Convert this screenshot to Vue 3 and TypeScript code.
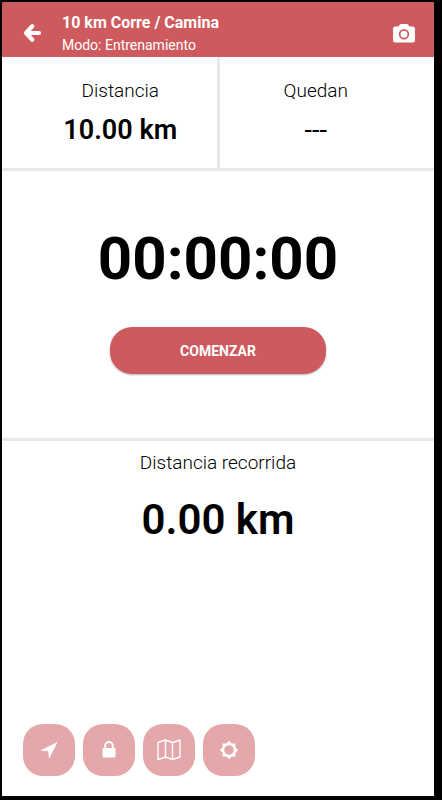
<script setup lang="ts">
import { ref } from 'vue'

interface Stat {
  label: string
  value: string
  empty?: boolean
}

const stats: Stat[] = [
  { label: 'Distancia', value: '10.00 km' },
  { label: 'Quedan', value: '---', empty: true },
]
const elapsed = ref('00:00:00')
const covered = ref('0.00 km')
</script>

<template>
  <div class="frame">
    <div class="screen">
      <header class="bar">
        <button class="bar-button" type="button" aria-label="Volver">
          <svg width="20" height="20" viewBox="0 0 20 20">
            <path d="M10.300 3.200 4 10l6.300 6.800M4.500 10h12.500" fill="none" stroke="#fff" stroke-width="4.200" stroke-linecap="round" stroke-linejoin="round" />
          </svg>
        </button>
        <div class="titles">
          <h1>10 km Corre / Camina</h1>
          <p>Modo: Entrenamiento</p>
        </div>
        <button class="bar-button" type="button" aria-label="Cámara">
          <svg width="22" height="20" viewBox="0 0 22 20">
            <path fill="#fff" fill-rule="evenodd" d="M2.500 3.500h3l1.200-1.700Q7.300 1 8.300 1h5.400q1 0 1.600.8l1.200 1.700h3q2.500 0 2.500 2.500v11q0 2.500-2.500 2.500h-17Q0 19.500 0 17V6q0-2.500 2.500-2.500ZM11 6a5.200 5.200 0 1 0 0 10.400a5.200 5.200 0 1 0 0-10.400Zm0 1.700a3.500 3.500 0 1 1 0 7a3.500 3.500 0 1 1 0-7Z" />
          </svg>
        </button>
      </header>

      <section class="stats">
        <div v-for="stat in stats" :key="stat.label" class="stat">
          <h2 class="label">{{ stat.label }}</h2>
          <p class="stat-value" :class="{ empty: stat.empty }">{{ stat.value }}</p>
        </div>
      </section>

      <section class="timer">
        <p class="clock">{{ elapsed }}</p>
        <button class="start" type="button">COMENZAR</button>
      </section>

      <section class="covered">
        <h2 class="label">Distancia recorrida</h2>
        <p class="covered-value">{{ covered }}</p>
      </section>

      <nav class="tools">
        <button class="tool" type="button" aria-label="Ubicación">
          <svg width="24" height="24" viewBox="0 0 24 24">
            <path fill="#fff" stroke="#fff" stroke-width="0.600" stroke-linejoin="round" d="M20 4.500 12.200 20 11.500 12.800 4 12.500Z" />
          </svg>
        </button>
        <button class="tool" type="button" aria-label="Bloquear">
          <svg width="24" height="24" viewBox="0 0 24 24">
            <path d="M8.200 10V7.800a3.800 3.800 0 0 1 7.600 0V10" fill="none" stroke="#fff" stroke-width="2" />
            <rect x="5.500" y="10" width="13" height="9.500" rx="1" fill="#fff" />
          </svg>
        </button>
        <button class="tool" type="button" aria-label="Mapa">
          <svg width="24" height="24" viewBox="0 0 24 24">
            <path d="M1 4.500 8.500 2 15.500 4.500 23 2V19L15.500 21.500 8.500 19 1 21.500ZM8.500 2V19M15.500 4.500V21.500" fill="none" stroke="#fff" stroke-width="1.400" stroke-linejoin="round" />
          </svg>
        </button>
        <button class="tool" type="button" aria-label="Ajustes">
          <svg width="24" height="24" viewBox="0 0 24 24">
            <path fill="#fff" fill-rule="evenodd" d="M12 2.800 14.700 5.600H18.400V9.300L21.200 12 18.400 14.700V18.400H14.700L12 21.200 9.300 18.400H5.600V14.700L2.800 12 5.600 9.300V5.600H9.300ZM12 7.200a4.800 4.800 0 1 0 0 9.600a4.800 4.800 0 1 0 0-9.600Z" />
          </svg>
        </button>
      </nav>
    </div>
  </div>
</template>

<style>
body {
  margin: 0;
}
</style>

<style scoped>
.frame {
  box-sizing: border-box;
  display: flex;
  min-height: 100vh;
  padding: 2px 8px 4px 2px;
  background: #000;
  color: #000;
  font-family: Roboto, "Liberation Sans", sans-serif;
}

.screen {
  flex: 1;
  display: flex;
  flex-direction: column;
  background: #fff;
}

h1,
h2,
p {
  margin: 0;
}

button {
  border: 0;
  padding: 0;
  color: #fff;
  font-family: inherit;
  cursor: pointer;
}

svg {
  display: block;
}

.bar {
  display: flex;
  align-items: center;
  height: 55px;
  background: #cf5a5e;
  color: #fff;
}

.bar-button {
  display: flex;
  align-items: center;
  justify-content: center;
  width: 60px;
  height: 55px;
  padding-top: 6px;
  background: none;
}

.titles {
  flex: 1;
  padding-top: 6px;
}

.titles h1 {
  font-size: 16px;
  line-height: 24px;
  font-weight: 700;
}

.titles p {
  font-size: 14px;
  line-height: 20px;
}

.stats {
  display: flex;
  border-bottom: 3px solid #e8e8e8;
}

.stat {
  flex: 1;
  padding: 20px 0 22px 22px;
  text-align: center;
}

.stat + .stat {
  padding-left: 0;
  padding-right: 22px;
  border-left: 3px solid #e8e8e8;
}

.label {
  font-size: 19px;
  line-height: 27px;
  font-weight: 300;
}

.stat-value {
  font-size: 27px;
  line-height: 32px;
  padding-top: 10px;
  font-weight: 600;
}

.stat-value.empty {
  font-weight: 400;
}

.timer {
  display: flex;
  flex-direction: column;
  align-items: center;
  gap: 32px;
  padding: 52px 0 64px;
  border-bottom: 3px solid #e8e8e8;
}

.clock {
  font-size: 60px;
  line-height: 72px;
  font-weight: 700;
}

.start {
  width: 50%;
  height: 47px;
  border-radius: 22px;
  background: #cf5a5e;
  box-shadow: 0 1px 2px rgba(0, 0, 0, 0.3);
  font-size: 14px;
  font-weight: 700;
}

.covered {
  flex: 1;
  padding-top: 8px;
  text-align: center;
}

.covered-value {
  padding-top: 18px;
  font-size: 42px;
  line-height: 52px;
  font-weight: 600;
}

.tools {
  display: flex;
  gap: 8px;
  padding: 0 21px 20px;
}

.tool {
  display: flex;
  align-items: center;
  justify-content: center;
  width: 52px;
  height: 52px;
  border-radius: 20px;
  background: #e4a8aa;
}
</style>
